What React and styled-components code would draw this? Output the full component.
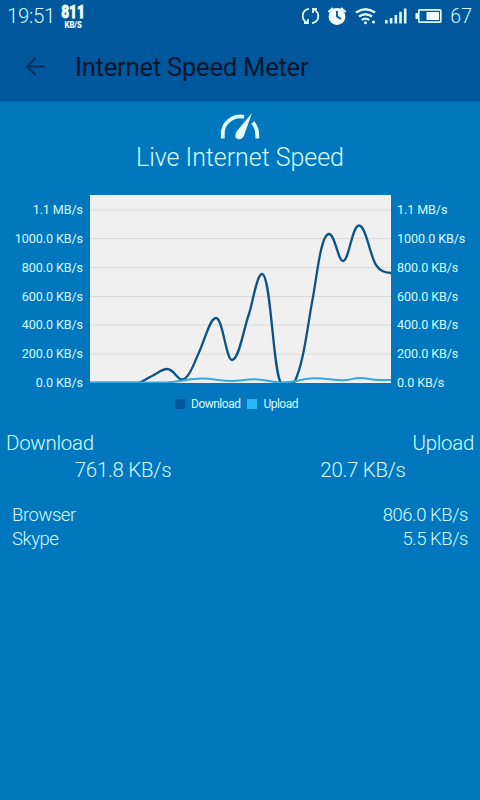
import React from 'react';
import styled, { createGlobalStyle } from 'styled-components';

const GlobalStyle = createGlobalStyle`
  * {
    box-sizing: border-box;
  }

  body {
    margin: 0;
    background: #0277bd;
    font-family: Roboto, "Liberation Sans", sans-serif;
    font-weight: 340;
    color: #d2fbff;
  }
`;

const Screen = styled.div`
  width: 480px;
  height: 800px;
  overflow: hidden;
  background: #0277bd;
`;

const Header = styled.header`
  height: 101px;
  background: #01579b;
  box-shadow: 0 1px 2px rgba(0, 50, 100, 0.25);
`;

const StatusBar = styled.div`
  display: flex;
  align-items: center;
  height: 33px;
  padding: 0 8px 0 7px;
`;

const Clock = styled.span`
  width: 52px;
  font-size: 20.5px;
  line-height: 33px;
  letter-spacing: -0.35px;
`;

const SpeedBadge = styled.div`
  display: flex;
  flex-direction: column;
  align-items: center;
  width: 28px;
  color: #f4ffff;
  font-weight: 900;
`;

const BadgeValue = styled.span`
  font-size: 18.5px;
  line-height: 17px;
  transform: scaleX(0.74);
  -webkit-text-stroke: 0.8px #f4ffff;
`;

const BadgeUnit = styled.span`
  font-size: 9px;
  line-height: 9px;
  transform: scaleX(0.86);
`;

const StatusIcons = styled.svg`
  margin-left: auto;
  width: 144px;
  height: 33px;
`;

const Battery = styled.span`
  margin-left: 6px;
  font-size: 19.5px;
  line-height: 33px;
`;

const Toolbar = styled.div`
  display: flex;
  align-items: center;
  height: 68px;
  padding-left: 25px;
  color: #06162f;
`;

const BackIcon = styled.svg`
  width: 21px;
  height: 20px;
  margin-right: 29px;
`;

const Title = styled.h1`
  margin: 0;
  font-size: 25.6px;
  font-weight: 400;
  line-height: 68px;
  letter-spacing: -0.24px;
  white-space: nowrap;
`;

const Hero = styled.section`
  display: flex;
  flex-direction: column;
  align-items: center;
  height: 94px;
  padding-top: 11px;
`;

const GaugeIcon = styled.svg`
  width: 40px;
  height: 28px;
`;

const HeroTitle = styled.h2`
  margin: 3px 0 0;
  font-size: 25px;
  font-weight: 340;
  line-height: 30px;
  letter-spacing: -0.05px;
  white-space: nowrap;
`;

const Chart = styled.section`
  display: grid;
  grid-template-columns: 90px 301px 89px;
  height: 188px;
`;

const Axis = styled.div`
  display: flex;
  flex-direction: column;
  padding-top: 1px;
  padding-left: ${({ $side }) => ($side === 'right' ? '6px' : '0')};
  padding-right: ${({ $side }) => ($side === 'left' ? '7px' : '0')};
  text-align: ${({ $side }) => ($side === 'left' ? 'right' : 'left')};
`;

const Tick = styled.span`
  flex: 0 0 28.85px;
  font-size: 12.6px;
  font-weight: 370;
  line-height: 28.85px;
  letter-spacing: -0.1px;
  white-space: nowrap;
`;

const Plot = styled.svg`
  display: block;
  width: 301px;
  height: 188px;
  background: #f0f0f0;
`;

const Legend = styled.div`
  display: flex;
  align-items: center;
  height: 42px;
  padding-left: 175px;
  font-size: 12px;
  font-weight: 370;
  letter-spacing: -0.5px;
`;

const LegendItem = styled.div`
  display: flex;
  align-items: center;
  margin-right: 7px;
`;

const Swatch = styled.span`
  width: 10px;
  height: 10px;
  margin-right: 6px;
  background: ${({ $color }) => $color};
`;

const Totals = styled.section`
  display: grid;
  grid-template-columns: 1fr 1fr;
  padding: 5px 6px 0;
`;

const TotalLabel = styled.span`
  font-size: 20.5px;
  line-height: 27px;
  letter-spacing: -0.3px;
  text-align: ${({ $align }) => $align || 'left'};
`;

const TotalValue = styled.span`
  font-size: 20.5px;
  line-height: 27px;
  letter-spacing: -0.3px;
  text-align: center;
  padding-left: ${({ $shift }) => $shift || '0'};
`;

const Apps = styled.section`
  padding: 18.5px 12px 0;
`;

const AppRow = styled.div`
  display: flex;
  justify-content: space-between;
  font-size: 18.5px;
  line-height: 24px;
  letter-spacing: -0.45px;
`;

const ticks = [
  '1.1 MB/s',
  '1000.0 KB/s',
  '800.0 KB/s',
  '600.0 KB/s',
  '400.0 KB/s',
  '200.0 KB/s',
  '0.0 KB/s',
];

const gridLines = [15, 43.5, 72.5, 101.5, 130, 159];

const apps = [
  { name: 'Browser', speed: '806.0 KB/s' },
  { name: 'Skype', speed: '5.5 KB/s' },
];

const downloadPath =
  'M0 188 H48 C53 187 57 183 62 181 C68 178 72 174 77 174 ' +
  'C84 174 87 184.500 92 184.500 C99 184.500 105 166 110 155 ' +
  'C115 144 120 123 126 123 C133 123 136 165 142 165 ' +
  'C149 165 153 136 159 119 C163 106 167 79 172 79 ' +
  'C181 79 183 178 191 188 H204 C214 169 218 127 223 102 ' +
  'C227 80 231 39 239 39 C245 39 248 66 253 66 ' +
  'C259 66 262 30.500 269 30.500 C276 30.500 280 61 286 70 C290 76 294 77.500 301 78';

const uploadPath =
  'M0 187.500 H75 C89 187 99 183.500 112 183.500 C124 183.500 129 186 142 186 ' +
  'C151 186 154 184.300 164 184.300 C176 184.300 182 187.500 194 187.500 ' +
  'C208 187.500 211 183.300 224 183.300 C237 183.300 242 185.300 253 185.300 ' +
  'C260 185.300 263 183 270 183 C278 183 281 185 289 185 H301';

function StatusBarIcons() {
  return (
    <StatusIcons viewBox="300 0 144 33" fill="none" stroke="#dcfcff">
      <path d="M309 8.800 C301.500 10 300.500 19 307 22.500" strokeWidth="1.8" />
      <path d="M304 23 H308 V19" strokeWidth="1.8" />
      <path d="M312 23.200 C319.500 22 320.500 13 314 9.500" strokeWidth="1.8" />
      <path d="M317 9 H313 V13" strokeWidth="1.8" />

      <circle cx="337" cy="16.500" r="8.400" fill="#f4ffff" stroke="none" />
      <path d="M328.300 12 L333 8 M341 8 L345.700 12" strokeWidth="2" />
      <path d="M337 11 V16.500 L341 19" stroke="#01579b" strokeWidth="1.8" />

      <path d="M356 12.500 Q365.500 6 375 12.500" strokeWidth="2.6" />
      <path d="M359 16.500 Q365.500 11.800 372 16.500" strokeWidth="2.4" />
      <path d="M361.800 20 Q365.500 17.200 369.200 20" strokeWidth="2.2" />
      <circle cx="365.500" cy="22.800" r="1.500" fill="#dcfcff" stroke="none" />
      <circle cx="373.500" cy="22" r="1.600" fill="#dcfcff" stroke="none" />

      <g fill="#dcfcff" stroke="none">
        <rect x="385" y="20" width="2.600" height="3.500" />
        <rect x="389.800" y="18" width="2.600" height="5.500" />
        <rect x="394.500" y="15" width="2.600" height="8.500" />
        <rect x="399.200" y="11.800" width="2.600" height="11.700" />
        <rect x="403.900" y="8.500" width="2.600" height="15" />
      </g>

      <rect x="418.800" y="9.800" width="22" height="12.400" rx="1" strokeWidth="1.700" />
      <rect x="415.500" y="13" width="2.500" height="6" fill="#dcfcff" stroke="none" />
      <rect x="426.500" y="12" width="12.500" height="8" fill="#f4ffff" stroke="none" />
    </StatusIcons>
  );
}

function SpeedAxis({ side }) {
  return (
    <Axis $side={side}>
      {ticks.map((tick) => (
        <Tick key={tick}>{tick}</Tick>
      ))}
    </Axis>
  );
}

function App() {
  return (
    <Screen>
      <GlobalStyle />
      <Header>
        <StatusBar>
          <Clock>19:51</Clock>
          <SpeedBadge>
            <BadgeValue>811</BadgeValue>
            <BadgeUnit>KB/S</BadgeUnit>
          </SpeedBadge>
          <StatusBarIcons />
          <Battery>67</Battery>
        </StatusBar>
        <Toolbar>
          <BackIcon viewBox="0 0 21 20" fill="none" stroke="#06305f" strokeWidth="2">
            <path d="M20 9.500 H2 M10.500 1 L2 9.500 L10.500 18" />
          </BackIcon>
          <Title>Internet Speed Meter</Title>
        </Toolbar>
      </Header>

      <Hero>
        <GaugeIcon viewBox="220 112 40 28">
          <g fill="none" stroke="#dcfcff" strokeWidth="3.8">
            <path d="M222.800 138.500 V135 A17.500 17.500 0 0 1 244 116.800" />
            <path d="M252.800 122.500 Q257.300 128 257.300 135 V138.500" />
          </g>
          <path
            d="M252 113 L236.500 131.500 Q233.500 138 238 139 Q242 140 244 135.500 Z"
            fill="#e6fdff"
          />
        </GaugeIcon>
        <HeroTitle>Live Internet Speed</HeroTitle>
      </Hero>

      <Chart>
        <SpeedAxis side="left" />
        <Plot viewBox="0 0 301 188" fill="none">
          {gridLines.map((y) => (
            <line key={y} x1="0" x2="301" y1={y} y2={y} stroke="#dcdcdc" />
          ))}
          <path d={downloadPath} stroke="#0b5488" strokeWidth="2.3" />
          <path d={uploadPath} stroke="#32a9e0" strokeWidth="2" />
        </Plot>
        <SpeedAxis side="right" />
      </Chart>

      <Legend>
        <LegendItem>
          <Swatch $color="#01579b" />
          Download
        </LegendItem>
        <LegendItem>
          <Swatch $color="#29b6f6" />
          Upload
        </LegendItem>
      </Legend>

      <Totals>
        <TotalLabel>Download</TotalLabel>
        <TotalLabel $align="right">Upload</TotalLabel>
        <TotalValue>761.8 KB/s</TotalValue>
        <TotalValue $shift="12px">20.7 KB/s</TotalValue>
      </Totals>

      <Apps>
        {apps.map((app) => (
          <AppRow key={app.name}>
            <span>{app.name}</span>
            <span>{app.speed}</span>
          </AppRow>
        ))}
      </Apps>
    </Screen>
  );
}

export default App;
